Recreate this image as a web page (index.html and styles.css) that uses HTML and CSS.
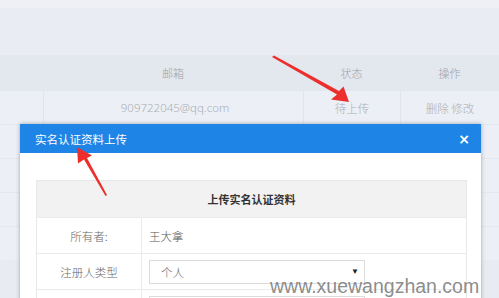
FILE: index.html
```html
<!DOCTYPE html>
<html lang="zh-CN">
<head>
<meta charset="utf-8">
<title>实名认证资料上传</title>
<link rel="stylesheet" href="styles.css">
</head>
<body>
<div class="page">
  <div class="topbar"></div>
  <div class="gap"></div>
  <div class="grid">
    <div class="row head">
      <div class="c c0"></div>
      <div class="c c1">邮箱</div>
      <div class="c c2">状态</div>
      <div class="c c3">操作</div>
    </div>
    <div class="row body">
      <div class="c c0"></div>
      <div class="c c1">909722045@qq.com</div>
      <div class="c c2">待上传</div>
      <div class="c c3">删除 修改</div>
    </div>
    <div class="row body">
      <div class="c c0"></div>
      <div class="c c1"></div>
      <div class="c c2"></div>
      <div class="c c3"></div>
    </div>
    <div class="row body">
      <div class="c c0"></div>
      <div class="c c1"></div>
      <div class="c c2"></div>
      <div class="c c3"></div>
    </div>
    <div class="row body">
      <div class="c c0"></div>
      <div class="c c1"></div>
      <div class="c c2"></div>
      <div class="c c3"></div>
    </div>
    <div class="row body">
      <div class="c c0"></div>
      <div class="c c1"></div>
      <div class="c c2"></div>
      <div class="c c3"></div>
    </div>
  </div>
</div>

<div class="modal">
  <div class="modal-title">
    <span>实名认证资料上传</span>
    <span class="close">×</span>
  </div>
  <div class="modal-body">
    <div class="form">
      <div class="form-head">上传实名认证资料</div>
      <div class="form-row">
        <div class="label">所有者:</div>
        <div class="value">王大拿</div>
      </div>
      <div class="form-row">
        <div class="label">注册人类型</div>
        <div class="value">
          <div class="select"><span>个人</span><span class="caret">▼</span></div>
        </div>
      </div>
      <div class="form-row">
        <div class="label"></div>
        <div class="value">
          <div class="select"></div>
        </div>
      </div>
    </div>
  </div>
</div>

<div class="watermark">www.xuewangzhan.com</div>

<svg class="arrows" width="499" height="298" viewBox="0 0 499 298">
  <path d="M272 57 L337 94.5 L331 99.5 L349 102 L343.5 86.5 L339 91 L274 55.5 Z" fill="#ec2f2d"/>
  <path d="M107 195 L87 158 L92 155.5 L77 147 L78 163.5 L84 159.5 L105.5 196 Z" fill="#ec2f2d"/>
</svg>
</body>
</html>
```

FILE: styles.css
```css
* { box-sizing: border-box; }
html, body { margin: 0; padding: 0; }
body {
  width: 499px;
  height: 298px;
  overflow: hidden;
  position: relative;
  background: #e8ebf2;
  font-family: "Noto Sans CJK SC", "Noto Sans", sans-serif;
}
.page { display: flex; flex-direction: column; }
.topbar { height: 8px; background: #eef0f5; }
.gap { height: 47px; background: #e9ecf3; }
.grid { display: flex; flex-direction: column; }
.row { display: flex; }
.row.head { height: 35px; background: #e3e7ee; color: #9ea2aa; font-size: 11px; font-weight: 300; }
.row.body { height: 34px; background: #eceff5; color: #abafb6; font-size: 11.5px; font-weight: 300; border-top: 1px solid #e3e7ee; }
.c { display: flex; align-items: center; justify-content: center; }
.row.body .c + .c { border-left: 1px solid #e0e4eb; }
.c0 { width: 43px; }
.c1 { width: 260px; }
.c2 { width: 97px; }
.c3 { width: 99px; }
.row.body .c1 { font-family: "Noto Sans", "Noto Sans CJK SC", sans-serif; font-size: 11.5px; padding-left: 3px; }

.modal {
  position: absolute;
  left: 20px;
  top: 124px;
  width: 461px;
  height: 200px;
  background: #fff;
  box-shadow: 0 0 4px rgba(60, 70, 90, 0.45);
}
.modal-title {
  height: 29px;
  background: #1e84e6;
  color: #fff;
  font-size: 11.5px;
  display: flex;
  align-items: center;
  justify-content: space-between;
  padding: 0 11px 0 15px;
}
.close { font-size: 14px; font-weight: bold; font-family: "DejaVu Sans", sans-serif; }
.modal-body { padding: 27px 14px 0 16px; }
.form { border: 1px solid #e8e8e8; border-bottom: none; }
.form-head {
  height: 36px;
  background: #f2f2f2;
  color: #333;
  font-size: 11px;
  font-weight: bold;
  display: flex;
  align-items: center;
  justify-content: center;
}
.form-row { display: flex; height: 36px; border-top: 1px solid #ebebeb; }
.label {
  width: 105px;
  border-right: 1px solid #ebebeb;
  display: flex;
  align-items: center;
  justify-content: center;
  font-size: 11.5px;
  font-weight: 300;
  color: #666;
}
.value {
  flex: 1;
  display: flex;
  align-items: center;
  padding-left: 7px;
  font-size: 11.5px;
  font-weight: 300;
  color: #555;
}
.select {
  width: 216px;
  height: 24px;
  border: 1px solid #dcdcdc;
  display: flex;
  align-items: center;
  justify-content: space-between;
  padding: 0 5px 0 11px;
  color: #666;
  font-size: 11.5px;
}
.caret { font-size: 8px; color: #222; font-family: "DejaVu Sans", sans-serif; line-height: 8px; }

.watermark {
  position: absolute;
  left: 270px;
  top: 276px;
  font-family: "Liberation Sans", Arial, sans-serif;
  font-size: 19.5px;
  color: rgba(110, 110, 110, 0.8);
  line-height: 20px;
}
.arrows { position: absolute; left: 0; top: 0; pointer-events: none; }
```
